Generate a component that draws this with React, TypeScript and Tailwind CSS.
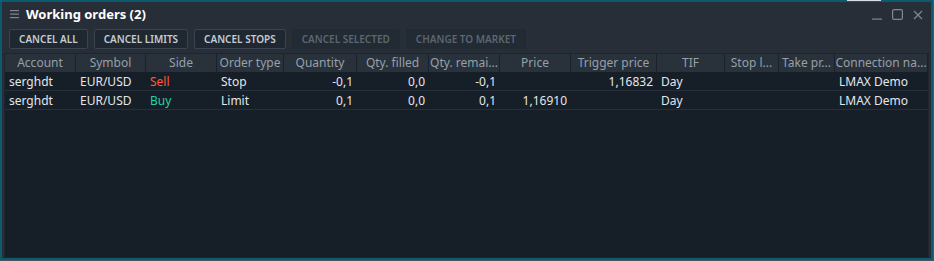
import React from "react";

type Col = { title: string; w: number; right?: boolean };

const cols: Col[] = [
  { title: "Account", w: 71 },
  { title: "Symbol", w: 70 },
  { title: "Side", w: 71 },
  { title: "Order type", w: 67 },
  { title: "Quantity", w: 73, right: true },
  { title: "Qty. filled", w: 72, right: true },
  { title: "Qty. remai...", w: 71, right: true },
  { title: "Price", w: 71, right: true },
  { title: "Trigger price", w: 86, right: true },
  { title: "TIF", w: 68 },
  { title: "Stop l...", w: 54 },
  { title: "Take pr...", w: 56 },
  { title: "Connection na...", w: 93 },
];

const rows = [
  ["serghdt", "EUR/USD", "Sell", "Stop", "-0,1", "0,0", "-0,1", "", "1,16832", "Day", "", "", "LMAX Demo"],
  ["serghdt", "EUR/USD", "Buy", "Limit", "0,1", "0,0", "0,1", "1,16910", "", "Day", "", "", "LMAX Demo"],
];

function Btn({ label, disabled }: { label: string; disabled?: boolean }) {
  return (
    <button
      className={
        disabled
          ? "h-[20px] px-[9px] rounded-[2px] bg-[#222a33] text-[#5c6670] text-[10px] font-semibold border border-transparent"
          : "h-[20px] px-[9px] rounded-[2px] bg-[#1f2731] text-[#c5ccd3] text-[10px] font-semibold border border-[#3a4450]"
      }
    >
      {label}
    </button>
  );
}

export default function App() {
  return (
    <div
      className="relative w-[934px] h-[261px] bg-[#4d545b] pr-px pb-px"
      style={{ fontFamily: '"Noto Sans", "Open Sans", sans-serif' }}
    >
      <span className="absolute top-0 left-[847px] w-[34px] h-[1px] bg-[#d5e0e4]" />
      <div className="h-full flex flex-col border-2 border-[#0b5a6e] bg-[#272e38]">
        {/* title bar */}
        <div className="h-[25px] flex items-center pl-[8px] pr-[8px] shrink-0">
          <svg width="10" height="9" viewBox="0 0 10 9" className="mr-[6px]">
            <rect x="0" y="0" width="9" height="1.2" fill="#7f8891" />
            <rect x="0" y="3.5" width="9" height="1.2" fill="#7f8891" />
            <rect x="0" y="7" width="9" height="1.2" fill="#7f8891" />
          </svg>
          <span className="text-[13px] font-bold text-white">Working orders (2)</span>
          <div className="ml-auto flex items-center gap-[10px] text-[#7f8891]">
            <svg width="10" height="10" viewBox="0 0 10 10">
              <rect x="0" y="8.5" width="10" height="1.2" fill="currentColor" />
            </svg>
            <svg width="11" height="11" viewBox="0 0 11 11">
              <rect x="0.6" y="0.6" width="9.8" height="9.8" rx="1.5" fill="none" stroke="currentColor" strokeWidth="1.2" />
            </svg>
            <svg width="10" height="10" viewBox="0 0 10 10">
              <path d="M1 1 L9 9 M9 1 L1 9" stroke="currentColor" strokeWidth="1.2" />
            </svg>
          </div>
        </div>
        {/* toolbar */}
        <div className="flex gap-[6px] pl-[7px] pt-[2px] shrink-0">
          <Btn label="CANCEL ALL" />
          <Btn label="CANCEL LIMITS" />
          <Btn label="CANCEL STOPS" />
          <Btn label="CANCEL SELECTED" disabled />
          <Btn label="CHANGE TO MARKET" disabled />
        </div>
        {/* table */}
        <div className="flex-1 mt-[4px] mx-[2px] border border-[#1d252e] bg-[#161e28] flex flex-col text-[12px]">
          <div className="flex h-[18px] bg-[#29313b] shrink-0">
            {cols.map((c, i) => (
              <div
                key={i}
                style={{ width: c.w }}
                className="h-full flex items-center justify-center px-[4px] text-[#95a0aa] border-r border-[#1b222b] whitespace-nowrap overflow-hidden"
              >
                {c.title}
              </div>
            ))}
          </div>
          {rows.map((r, ri) => (
            <div key={ri} className="flex h-[19px] pt-[1px] border-b border-[#27303a] shrink-0">
              {r.map((v, ci) => {
                const c = cols[ci];
                let color = "text-[#e3e7ea]";
                if (v === "Sell") color = "text-[#ff5b3a]";
                if (v === "Buy") color = "text-[#22d3a5]";
                return (
                  <div
                    key={ci}
                    style={{ width: c.w }}
                    className={
                      "h-full flex items-center px-[4px] whitespace-nowrap overflow-hidden " +
                      color +
                      (c.right ? " justify-end" : "")
                    }
                  >
                    {v}
                  </div>
                );
              })}
            </div>
          ))}
        </div>
      </div>
    </div>
  );
}
